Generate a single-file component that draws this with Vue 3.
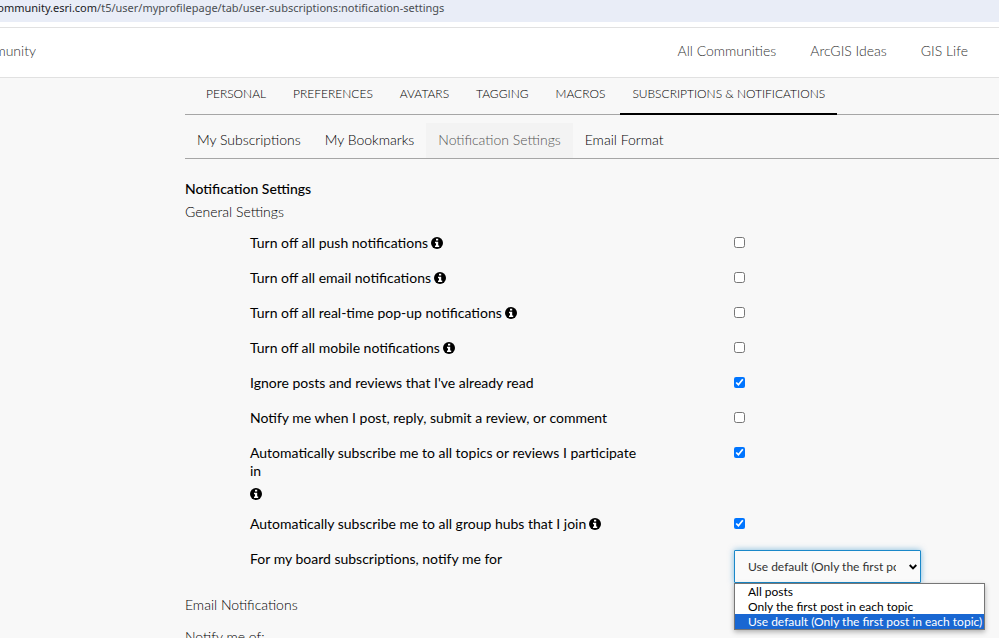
<script setup>
import { ref } from 'vue'

const siteLinks = ['All Communities', 'ArcGIS Ideas', 'GIS Life']
const tabs = ['Personal', 'Preferences', 'Avatars', 'Tagging', 'Macros', 'Subscriptions & Notifications']
const activeTab = 'Subscriptions & Notifications'
const subTabs = ['My Subscriptions', 'My Bookmarks', 'Notification Settings', 'Email Format']
const activeSubTab = 'Notification Settings'

const settings = ref([
  { id: 'push', label: 'Turn off all push notifications', info: true, on: false },
  { id: 'email', label: 'Turn off all email notifications', info: true, on: false },
  { id: 'popup', label: 'Turn off all real-time pop-up notifications', info: true, on: false },
  { id: 'mobile', label: 'Turn off all mobile notifications', info: true, on: false },
  { id: 'ignore', label: "Ignore posts and reviews that I've already read", info: false, on: true },
  { id: 'own', label: 'Notify me when I post, reply, submit a review, or comment', info: false, on: false },
  { id: 'topics', label: 'Automatically subscribe me to all topics or reviews I participate in', info: true, on: true },
  { id: 'hubs', label: 'Automatically subscribe me to all group hubs that I join', info: true, on: true },
])

const options = ['All posts', 'Only the first post in each topic', 'Use default (Only the first post in each topic)']
const choice = ref(options[2])
</script>

<template>
  <div class="page">
    <div class="address"><span class="host">community.esri.com</span>/t5/user/myprofilepage/tab/user-subscriptions:notification-settings</div>
    <header class="site">
      <a class="brand" href="#">Esri Community</a>
      <nav class="links">
        <a v-for="l in siteLinks" :key="l" href="#">{{ l }}</a>
      </nav>
    </header>

    <main class="content">
      <nav class="tabs">
        <a v-for="t in tabs" :key="t" href="#" :class="{ active: t === activeTab }">{{ t }}</a>
      </nav>
      <nav class="subtabs">
        <a v-for="t in subTabs" :key="t" href="#" :class="{ active: t === activeSubTab }">{{ t }}</a>
      </nav>

      <h1>Notification Settings</h1>
      <h2>General Settings</h2>

      <form class="rows">
        <div v-for="s in settings" :key="s.id" class="row">
          <div class="name">
            <label :for="s.id">{{ s.label }}</label>
            <svg v-if="s.info" class="info" viewBox="0 0 12 12" aria-hidden="true">
              <circle cx="6" cy="6" r="6" fill="#000" />
              <path d="M5 1.8h2.2v1.8H5zM4 4.8h3.2v3.8H8.2V10H4V8.6h1V6.2H4z" fill="#fff" />
            </svg>
          </div>
          <input :id="s.id" v-model="s.on" type="checkbox" />
        </div>
        <div class="row">
          <div class="name"><label for="board">For my board subscriptions, notify me for</label></div>
          <div class="picker">
            <select id="board" v-model="choice">
              <option v-for="o in options" :key="o">{{ o }}</option>
            </select>
            <svg class="chevron" viewBox="0 0 8 6" aria-hidden="true">
              <path d="M0.7 1l3.3 3.3L7.3 1" fill="none" stroke="#000" stroke-width="1.9" />
            </svg>
            <ul class="menu">
              <li v-for="o in options" :key="o" :class="{ chosen: o === choice }">{{ o }}</li>
            </ul>
          </div>
        </div>
      </form>

      <h2 class="mail">Email Notifications</h2>
      <h2 class="of">Notify me of:</h2>
    </main>
  </div>
</template>

<style>
body {
  background: #f8f8f8;
  overflow: hidden;
}
</style>

<style scoped>
.page {
  font-family: Lato, "Liberation Sans", sans-serif;
  font-size: 14px;
  line-height: 18px;
  color: #000;
}
a {
  color: inherit;
  text-decoration: none;
}
.address {
  height: 22px;
  background: #e9edf7;
  color: #4a4d52;
  font: 11px/16px "Noto Sans", sans-serif;
  white-space: nowrap;
  text-indent: -8px;
  overflow: hidden;
}
.host {
  color: #202124;
}
.site {
  display: flex;
  justify-content: space-between;
  align-items: center;
  margin-top: 5px;
  height: 46px;
  padding-bottom: 3px;
  border-top: 1px solid #e1e1e1;
  border-bottom: 1px solid #e1e1e1;
  background: #fff;
  box-shadow: 0 -5px #fff;
  color: #333;
  font-weight: 300;
}
.brand {
  display: flex;
  justify-content: flex-end;
  width: 36px;
  overflow: hidden;
  white-space: nowrap;
}
.links {
  display: flex;
  gap: 34px;
  padding-right: 31px;
}
.content {
  padding-left: 185px;
}
.tabs {
  display: flex;
  gap: 3px;
  padding-left: 9px;
  border-bottom: 1px solid #a6a6a6;
  font-size: 12px;
  font-weight: 300;
  text-transform: uppercase;
}
.tabs a {
  padding: 7px 12px 10px;
  border-bottom: 1px solid transparent;
}
.tabs .active {
  border-bottom: 2px solid #000;
  margin-bottom: -1px;
}
.subtabs {
  display: flex;
  padding-top: 8px;
  border-bottom: 1px solid #a6a6a6;
  font-weight: 300;
}
.subtabs a {
  padding: 8px 12px 9px;
}
.subtabs .active {
  background: #f3f3f3;
  color: #555;
}
h1,
h2 {
  margin: 0;
  font-size: 14px;
  font-weight: 400;
}
h1 {
  margin-top: 21px;
  font-weight: 500;
}
h2 {
  margin-top: 5px;
  font-weight: 300;
}
.rows {
  margin-top: 13px;
  padding-left: 65px;
}
.row {
  display: grid;
  grid-template-columns: minmax(0, 390px) 1fr;
  column-gap: 94px;
  padding-bottom: 13px;
}
.name {
  display: flex;
  flex-wrap: wrap;
  align-content: flex-start;
  align-items: center;
  column-gap: 3px;
  row-gap: 6px;
  min-height: 22px;
}
.info {
  width: 12px;
  height: 12px;
  margin: 2px 0;
}
input {
  width: 11px;
  height: 11px;
  margin: 3px 0 0;
}
.picker {
  position: relative;
  width: 187px;
  height: 33px;
}
select {
  display: block;
  appearance: none;
  width: 100%;
  height: 33px;
  padding: 0 24px 0 13px;
  border: 1px solid #1a88c9;
  border-radius: 1px;
  background: #fafafa;
  box-shadow: 0 0 6px rgba(0, 121, 193, 0.5);
  color: #333;
  font: 12px/18px Lato, sans-serif;
  text-overflow: clip;
}
.chevron {
  position: absolute;
  top: 14px;
  right: 4px;
  width: 8px;
  height: 6px;
}
.menu {
  position: absolute;
  top: 33px;
  left: 0;
  margin: 0;
  padding: 0;
  width: 249px;
  border: 1px solid #767676;
  background: #fff;
  box-shadow: 0 2px 5px rgba(0, 0, 0, 0.3);
  font-size: 12px;
  line-height: 15px;
  list-style: none;
  white-space: nowrap;
}
.menu li {
  padding-left: 13px;
}
.menu .chosen {
  background: #1967d2;
  color: #fff;
}
.mail {
  margin-top: 0;
}
.of {
  margin-top: 14px;
}
</style>
